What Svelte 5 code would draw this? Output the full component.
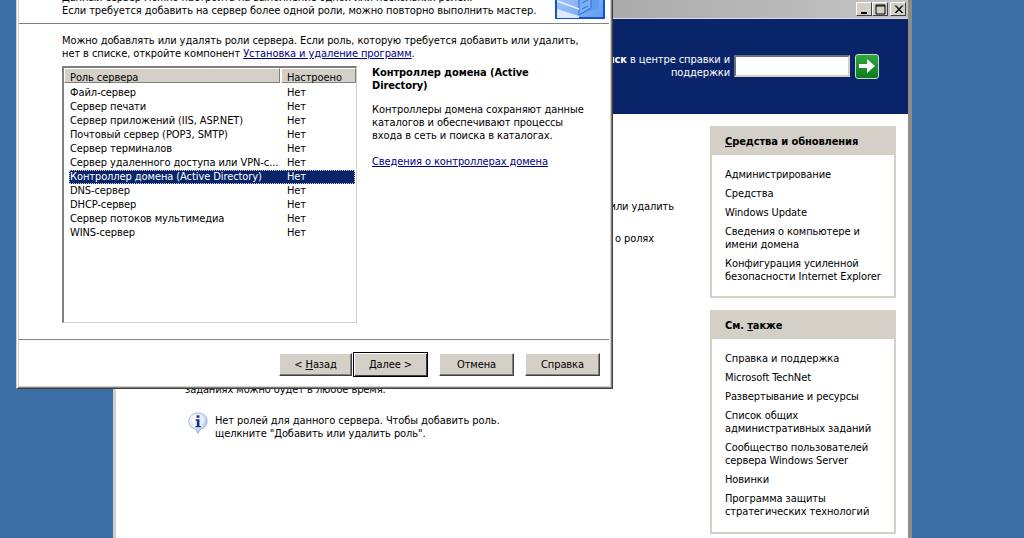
<script>
  const roles = [
    'Файл-сервер',
    'Сервер печати',
    'Сервер приложений (IIS, ASP.NET)',
    'Почтовый сервер (POP3, SMTP)',
    'Сервер терминалов',
    'Сервер удаленного доступа или VPN-с...',
    'Контроллер домена (Active Directory)',
    'DNS-сервер',
    'DHCP-сервер',
    'Сервер потоков мультимедиа',
    'WINS-сервер'
  ];
  const tools = [
    'Администрирование',
    'Средства',
    'Windows Update',
    'Сведения о компьютере и имени домена',
    'Конфигурация усиленной безопасности Internet Explorer'
  ];
  const also = [
    'Справка и поддержка',
    'Microsoft TechNet',
    'Развертывание и ресурсы',
    'Список общих административных заданий',
    'Сообщество пользователей сервера Windows Server',
    'Новинки',
    'Программа защиты стратегических технологий'
  ];
</script>

<div class="desktop">
  <section class="back">
    <header class="titlebar">
      <div class="controls">
        <button class="ctl" aria-label="Свернуть"><svg width="15" height="13" viewBox="0 0 15 13"><rect x="4" y="9" width="6" height="2" fill="#000"/></svg></button>
        <button class="ctl" aria-label="Развернуть"><svg width="15" height="13" viewBox="0 0 15 13"><path d="M3 2h9v9H3zM3 3h9" fill="none" stroke="#000"/></svg></button>
        <button class="ctl close" aria-label="Закрыть"><svg width="15" height="13" viewBox="0 0 15 13"><path d="M4 2.500l7 7.500M5 2.500l7 7.500M11 2.500l-7 7.500M12 2.500l-7 7.500" fill="none" stroke="#000"/></svg></button>
      </div>
    </header>
    <div class="band">
      <div class="search">
        <div class="search-label"><b>Поиск</b> в центре справки и<br />поддержки</div>
        <div class="search-input"></div>
        <div class="go">
          <svg width="18" height="16" viewBox="0 0 18 16"><path d="M1 6h8V1l8 7-8 7v-5H1z" fill="#fff"/></svg>
        </div>
      </div>
    </div>
    <div class="body">
      <div class="main">
        <p class="frag one">Чтобы настроить роль для этого сервера, щелкните команду Добавить или удалить</p>
        <p class="frag two">Сведения о настройке сервера приведены в разделе о ролях</p>
        <p class="frag three">заданиях можно будет в любое время.</p>
        <div class="note">
          <svg class="info" width="22" height="23" viewBox="0 0 22 24">
            <defs>
              <radialGradient id="bub" cx="0.35" cy="0.3" r="0.8">
                <stop offset="0" stop-color="#ffffff"/>
                <stop offset="0.6" stop-color="#dce6f6"/>
                <stop offset="1" stop-color="#7f9bd0"/>
              </radialGradient>
            </defs>
            <path d="M11 1c5.500 0 9.500 3.600 9.500 8.500S16.500 18 13 18l-2 4.500L9 18C5 17.500 1.500 14.500 1.500 9.500S5.500 1 11 1z" fill="url(#bub)" stroke="#9fb4d8"/>
            <rect x="9.500" y="3.500" width="3" height="2.500" fill="#1b2f80"/>
            <path d="M8.500 7.500h4v7h1.500v1.500H8.500v-1.500h1.300V9H8.500z" fill="#1b2f80"/>
          </svg>
          <p>Нет ролей для данного сервера. Чтобы добавить роль.<br />щелкните "Добавить или удалить роль".</p>
        </div>
      </div>
      <aside class="side">
        <div class="panel first">
          <h3><u>С</u>редства и обновления</h3>
          <ul>
            {#each tools as item}<li>{item}</li>{/each}
          </ul>
        </div>
        <div class="panel">
          <h3>См. <u>т</u>акже</h3>
          <ul>
            {#each also as item}<li>{item}</li>{/each}
          </ul>
        </div>
      </aside>
    </div>
  </section>

  <section class="dialog">
    <div class="head">
      <p>Данный сервер можно настроить на выполнение одной или нескольких ролей.<br />Если требуется добавить на сервер более одной роли, можно повторно выполнить мастер.</p>
      <svg class="wizard" width="50" height="60" viewBox="0 0 50 60">
        <defs>
          <linearGradient id="wz" x1="0" y1="0" x2="1" y2="1">
            <stop offset="0" stop-color="#c4dcfb"/>
            <stop offset="1" stop-color="#5f9bf0"/>
          </linearGradient>
        </defs>
        <rect x="1" y="1" width="48" height="58" fill="url(#wz)" stroke="#1252cc" stroke-width="2"/>
        <path d="M2 50l22 7v2H2z" fill="#dcebff"/>
        <path d="M24 56V47l12-6 0-12 8 1v19z" fill="#5f9bf0"/>
        <path d="M24 56V36l12-6V49z" fill="#7cb0f5" stroke="#2d6fdc"/>
        <path d="M2 42l22 8" stroke="#e8f2ff" stroke-width="1.500"/>
        <path d="M27 44l6-3M27 50l6-3" stroke="#2d6fdc" fill="none"/>
      </svg>
    </div>
    <div class="sep"></div>
    <div class="content">
      <p class="intro">Можно добавлять или удалять роли сервера. Если роль, которую требуется добавить или удалить,<br />нет в списке, откройте компонент <a href="#a">Установка и удаление программ</a>.</p>
      <div class="columns">
        <div class="list">
          <div class="list-head">
            <span class="c1">Роль сервера</span>
            <span class="c2">Настроено</span>
          </div>
          {#each roles as role, i}
            <div class="row" class:sel={i === 6}>
              <span class="r1">{role}</span>
              <span class="r2">Нет</span>
            </div>
          {/each}
        </div>
        <div class="detail">
          <h4>Контроллер домена (Active Directory)</h4>
          <p>Контроллеры домена сохраняют данные каталогов и обеспечивают процессы входа в сеть и поиска в каталогах.</p>
          <a href="#b">Сведения о контроллерах домена</a>
        </div>
      </div>
    </div>
    <div class="sep"></div>
    <div class="buttons">
      <button>&lt; <u>Н</u>азад</button>
      <button class="default"><u>Д</u>алее &gt;</button>
      <button class="gap">Отмена</button>
      <button class="gap">Справка</button>
    </div>
  </section>
</div>

<style>
  :global(body) { margin: 0; background: #3a6ea5; }
  .desktop {
    position: relative;
    width: 1024px;
    height: 538px;
    overflow: hidden;
    background: #3a6ea5;
    font: 11px/13px "DejaVu Sans Condensed", "DejaVu Sans", sans-serif;
    font-stretch: condensed;
    letter-spacing: -0.09px;
    color: #000;
  }
  p, h3, h4, ul { margin: 0; padding: 0; }
  button { font: inherit; font-stretch: condensed; letter-spacing: inherit; color: #000; padding: 0; }

  /* back window */
  .back {
    position: absolute;
    left: 113px;
    top: -4px;
    width: 799px;
    height: 560px;
    box-sizing: border-box;
    border-left: 3px solid #d4d0c8;
    border-right: 4px solid #8e8c88;
    background: #fff;
    display: flex;
    flex-direction: column;
  }
  .titlebar {
    height: 23px;
    flex: none;
    box-sizing: border-box;
    background: linear-gradient(90deg, #808080, #c4c4c4);
    border-bottom: 1px solid #d9dde6;
    display: flex;
    justify-content: flex-end;
    padding: 6px 2px 0 0;
  }
  .controls { display: flex; }
  .ctl {
    width: 16px;
    height: 14px;
    box-sizing: border-box;
    background: #d4d0c8;
    border: 1px solid;
    border-color: #fff #404040 #404040 #fff;
    display: flex;
    align-items: center;
    justify-content: center;
  }
  .ctl svg { flex: none; }
  .close { margin-left: 2px; }
  .band {
    height: 95px;
    flex: none;
    background: #0a246a;
    display: flex;
    justify-content: flex-end;
    align-items: flex-start;
    padding: 34px 29px 0 0;
    box-sizing: border-box;
  }
  .search { display: flex; align-items: center; color: #fff; }
  .search-label { text-align: right; }
  .search-input {
    width: 116px;
    height: 22px;
    box-sizing: border-box;
    margin-left: 4px;
    background: #fff;
    border: 2px solid;
    border-color: #6b6f7c #d4d0c8 #d4d0c8 #6b6f7c;
  }
  .go {
    width: 24px;
    height: 25px;
    box-sizing: border-box;
    margin-left: 5px;
    border-radius: 3px;
    border: 1px solid #c9d8cc;
    background: linear-gradient(#2fa83a, #0f7a1f);
    display: flex;
    align-items: center;
    justify-content: center;
  }
  .body { display: flex; flex: 1; }
  .main { flex: 1; min-width: 0; padding: 86px 0 0 69px; }
  .frag { white-space: nowrap; }
  .one { width: 489px; text-align: right; }
  .two { width: 469px; text-align: right; margin-top: 19px; }
  .three { margin-top: 138px; }
  .note { display: flex; margin-top: 16px; margin-left: 2px; }
  .note p { padding-top: 2px; }
  .info { flex: none; margin-right: 6px; }
  .side { width: 186px; flex: none; margin: 12px 12px 0 0; }
  .panel { border: 2px solid #d4d0c8; border-top: 0; background: #fff; }
  .panel.first { margin-bottom: 12px; }
  .panel.first ul { padding-bottom: 13px; }
  .panel h3 {
    margin: 0 -2px;
    height: 29px;
    background: #d4d0c8;
    font-size: 11px;
    line-height: 31px;
    padding-left: 15px;
    font-weight: bold;
  }
  .panel ul { list-style: none; padding: 13px 8px 14px 13px; }
  .panel li + li { margin-top: 6px; }

  /* dialog */
  .dialog {
    position: absolute;
    left: 16px;
    top: -30px;
    width: 597px;
    height: 419px;
    box-sizing: border-box;
    background: #fff;
    border: 1px solid;
    border-color: #d4d0c8 #404040 #404040 #d4d0c8;
    box-shadow: inset 1px 1px 0 #fff, inset -1px -1px 0 #808080, inset 2px 2px 0 #d4d0c8, inset -2px -2px 0 #d4d0c8;
    display: flex;
    flex-direction: column;
    padding: 0 3px 0 2px;
  }
  .head {
    height: 52px;
    flex: none;
    box-sizing: border-box;
    display: flex;
    justify-content: space-between;
    align-items: flex-end;
    padding: 0 4px 0 43px;
    overflow: hidden;
  }
  .head p { padding-bottom: 6px; white-space: nowrap; }
  .wizard { flex: none; margin-bottom: 4px; }
  .sep { height: 2px; flex: none; background: linear-gradient(#808080 50%, #fff 50%); }
  .content { flex: 1; padding: 9px 0 0 43px; }
  .intro { white-space: nowrap; }
  a { color: #00007f; text-decoration: underline; }
  .columns { display: flex; margin-top: 6px; }
  .list {
    width: 295px;
    height: 257px;
    box-sizing: border-box;
    border: 2px solid;
    border-color: #808080 #d4d0c8 #d4d0c8 #808080;
    border-right-width: 1px;
    border-bottom-width: 1px;
    background: #fff;
  }
  .list-head { display: flex; height: 15px; margin-bottom: 3px; }
  .c1, .c2 {
    box-sizing: border-box;
    background: #d4d0c8;
    border: 1px solid;
    border-color: #fff #808080 #808080 #fff;
    line-height: 17px;
    padding-left: 5px;
  }
  .c1 { width: 216px; }
  .c2 { width: 75px; margin-left: 1px; }
  .row { display: flex; height: 14px; line-height: 14px; margin-left: 5px; margin-right: 1px; }
  .r1 {
    width: 211px;
    padding-left: 1px;
    box-sizing: border-box;
    white-space: nowrap;
    overflow: hidden;
  }
  .r2 { padding-left: 7px; }
  .row.sel { background: #0a246a; color: #fff; outline: 1px dotted #d4d0c8; outline-offset: -1px; }
  .detail { width: 214px; margin-left: 15px; }
  .detail h4 { font-size: 11px; font-weight: bold; line-height: 13px; }
  .detail p { margin: 11px 0 13px; }
  .buttons { display: flex; flex: none; height: 47px; padding: 12px 9px 0 0; box-sizing: border-box; justify-content: flex-end; align-items: flex-start; }
  .buttons button {
    width: 73px;
    height: 23px;
    box-sizing: border-box;
    background: #d4d0c8;
    border: 1px solid;
    border-color: #fff #404040 #404040 #fff;
    box-shadow: inset -1px -1px 0 #808080;
  }
  .buttons .default {
    width: 75px;
    height: 25px;
    margin-top: -1px;
    margin-left: 1px;
    border: 1px solid #000;
    box-shadow: inset 1px 1px 0 #fff, inset -1px -1px 0 #404040;
  }
  .buttons .gap { width: 75px; margin-left: 11px; }
</style>
